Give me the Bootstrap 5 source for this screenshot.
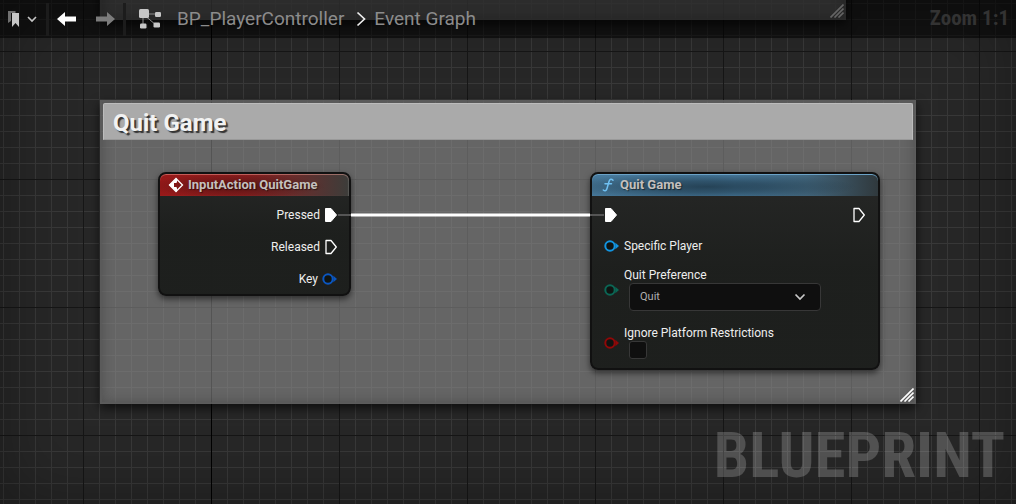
<!DOCTYPE html>
<html lang="en" data-bs-theme="dark">
<head>
<meta charset="utf-8">
<meta name="viewport" content="width=device-width, initial-scale=1">
<title>BP_PlayerController – Event Graph</title>
<link rel="stylesheet" href="https://cdn.jsdelivr.net/npm/bootstrap@5.3.0/dist/css/bootstrap.min.css">
<style>
  body { font-family: Roboto, "Liberation Sans", sans-serif; background: #262626; }

  /* Graph canvas: origin axis, major lines each 128px, minor lines each 16px */
  .graph {
    background:
      linear-gradient(#000, #000) 211px 0 / 1px 100% no-repeat,
      linear-gradient(90deg, #161616 1px, transparent 1px) 83px 0 / 128px 128px,
      linear-gradient(#161616 1px, transparent 1px) 0 51px / 128px 128px,
      linear-gradient(90deg, #383838 1px, transparent 1px) 3px 0 / 16px 16px,
      linear-gradient(#383838 1px, transparent 1px) 0 3px / 16px 16px,
      #272727;
  }
  .vignette { box-shadow: inset 0 0 70px rgba(0, 0, 0, .34); }

  .toolbar { height: 38px; background: rgba(0, 0, 0, .55); z-index: 5; padding: 0 7px 0 7px; }
  .tool { border: 0; background: none; padding: 0; line-height: 0; }
  .divider { width: 3px; height: 33px; background: #1c1c1c; }
  .crumb { color: #8c8c8c; font-size: 19px; line-height: 24px; margin-bottom: 1px; text-decoration: none; }
  .zoom-level { font: bold 21px/24px "Roboto Condensed", "Liberation Sans Narrow", sans-serif; color: #333; margin-bottom: 2px; }
  .watermark { right: 11px; bottom: 10px; font: bold 63px/76px "Roboto Condensed", "Liberation Sans Narrow", sans-serif; color: rgba(255, 255, 255, .2); }

  .comment-box {
    background: rgba(150, 150, 150, .56);
    border: 2px solid rgba(85, 85, 85, .7);
    box-shadow: 0 4px 10px rgba(0, 0, 0, .65), inset 0 0 12px rgba(40, 40, 40, .35);
  }
  .comment-main { left: 100px; top: 100px; width: 816px; height: 304px; padding: 1px; }
  .comment-above { left: 100px; top: -180px; width: 746px; height: 200px; color: #e0e0e0; }
  .comment-title {
    height: 37px; padding: 0 9px; background: #aaa; border: 1px solid #bcbcbc; border-bottom-color: #999; border-radius: 2px 2px 0 0;
    color: #f2f2f2; font-size: 24px; line-height: 38px; font-weight: 700; text-shadow: 2px 2px 1px #333;
  }
  .grip { right: 0; bottom: 0; }

  .node {
    top: 172px; border: 2px solid #111; border-radius: 8px;
    background: linear-gradient(rgba(36, 37, 36, .97), rgba(27, 29, 27, .97) 50%);
    box-shadow: 0 3px 6px rgba(0, 0, 0, .55); color: #eee; font-size: 12px; line-height: 15px;
  }
  .node-event { left: 158px; width: 193px; height: 124px; }
  .node-call { left: 590px; width: 290px; height: 198px; }
  .node-head {
    height: 22px; padding-left: 8px; gap: 4px; border-radius: 6px 6px 0 0; margin-bottom: 3px;
    color: #c4c0be; font-size: 13px; line-height: 14px; font-weight: 700; text-shadow: 1px 1px 1px rgba(0, 0, 0, .5);
  }
  .head-event {
    background: radial-gradient(ellipse 90px 12px at 40% 55%, rgba(50, 15, 15, .6), transparent),
      linear-gradient(90deg, #981919, #8a1d1d 45%, #6a2c2b 70%, #3c3d3a);
    box-shadow: inset 0 1px 0 rgba(255, 170, 160, .45), inset -1px 0 1px rgba(200, 200, 200, .2);
  }
  .head-call {
    background: radial-gradient(ellipse 150px 14px at 40% 58%, rgba(22, 42, 55, .7), rgba(22, 42, 55, .5) 40%, transparent),
      linear-gradient(90deg, #47799b, #4a7ea2 50%, #42667d 75%, #30393d);
    box-shadow: inset 0 1px 0 #6ba3c8;
  }
  .pin-row { height: 32px; }
  .pins-out { padding-right: 11px; }
  .pins-in { padding-left: 12px; }
  .pin-field { gap: 5px; margin-bottom: 15px; }
  .player-field { height: 30px; margin-bottom: 7px; }
  .pref-select {
    width: 192px; height: 28px; margin-left: 5px; padding: 0 10px; border: 1px solid #373737; border-radius: 4px;
    font-size: 11px; color: #b0b0b0; background-color: #0f0f0f; background-position: right 14px center; background-size: 12px 8px;
    background-image: url("data:image/svg+xml,%3Csvg xmlns='http://www.w3.org/2000/svg' width='12' height='8' viewBox='0 0 12 8'%3E%3Cpath d='M1.500 1.500L6 6l4.500-4.500' fill='none' stroke='%23c8c8c8' stroke-width='1.700'/%3E%3C/svg%3E");
  }
  .flag-check { width: 18px; height: 18px; margin: 0 0 0 5px; background-color: #0f0f0f; border: 1px solid #373737; border-radius: 3px; }
</style>
</head>
<body class="vh-100 overflow-hidden">
<svg class="d-none" aria-hidden="true">
  <symbol id="exec-on" viewBox="0 0 14 16"><path d="M1.500 1.500h5.500l5.500 6.500-5.500 6.500H1.500z" fill="#fff" stroke="#fff" stroke-linejoin="round"/></symbol>
  <symbol id="exec-off" viewBox="0 0 14 16"><path d="M2 1.500h5L12.300 8 7 14.500H2z" fill="none" stroke="#fff" stroke-width="1.300" stroke-linejoin="round"/></symbol>
  <symbol id="data-pin" viewBox="0 0 15 12"><circle cx="6" cy="6" r="4.700" fill="#101412" stroke="currentColor" stroke-width="2"/><path d="M11.400 2.800L15 6l-3.600 3.200z" fill="currentColor"/></symbol>
  <symbol id="grip-lines" viewBox="0 0 14 14"><path d="M.5 13.500l13-13M4.500 13.500l9-9M8.500 13.500l5-5" fill="none" stroke="currentColor" stroke-width="1.600"/></symbol>
</svg>

<main class="graph position-relative h-100 overflow-hidden">
  <div class="vignette position-absolute top-0 start-0 w-100 h-100"></div>
  <section class="comment-box comment-above position-absolute">
    <svg class="grip position-absolute" width="14" height="14"><use href="#grip-lines"/></svg>
  </section>

  <header class="toolbar position-relative d-flex align-items-center">
    <button class="tool d-flex align-items-center" type="button" aria-label="Bookmarks">
      <svg width="31" height="18" viewBox="0 0 31 18"><path d="M1 1h7.500v2H4v8l-3 2z" fill="#707070"/><path d="M5 3h7v14l-3.500-4L5 17z" fill="#c6c6c6"/><path d="M21 7l4 4 4-4" fill="none" stroke="#c6c6c6" stroke-width="1.600"/></svg>
    </button>
    <div class="divider ms-2"></div>
    <button class="tool ms-2" type="button" aria-label="Back"><svg width="19" height="14" viewBox="0 0 19 14"><path d="M0 7l8-7v4.500h11v5H8V14z" fill="#fff"/></svg></button>
    <button class="tool ms-3 ps-1" type="button" aria-label="Forward"><svg width="19" height="14" viewBox="0 0 19 14"><path d="M19 7l-8-7v4.500H0v5h11V14z" fill="#7c7c7c"/></svg></button>
    <div class="divider ms-2"></div>
    <nav class="d-flex align-items-center ms-2 ps-1" aria-label="Graph path">
      <svg width="23" height="20" viewBox="0 0 23 20"><path d="M5 5h14M5 5v12M5 5l13 11" stroke="#8c8c8c" fill="none"/><g fill="#c6c6c6"><rect x="1" width="10" height="9" rx="1.500"/><rect x="17" y="3" width="6" height="5" rx="1.200"/><rect x="2" y="14.500" width="6.500" height="5" rx="1.200"/><rect x="15.500" y="13.500" width="6.500" height="5" rx="1.200"/></g></svg>
      <a class="crumb ms-3 pe-1" href="#">BP_PlayerController</a>
      <svg class="mx-2" width="10" height="16" viewBox="0 0 10 16"><path d="M1.500 1.500L8.500 8l-7 6.500" fill="none" stroke="#eee" stroke-width="1.700"/></svg>
      <a class="crumb" href="#">Event Graph</a>
    </nav>
    <span class="zoom-level ms-auto">Zoom 1:1</span>
  </header>

  <div class="watermark position-absolute">BLUEPRINT</div>

  <section class="comment-box comment-main position-absolute text-white">
    <h1 class="comment-title m-0">Quit Game</h1>
    <svg class="grip position-absolute" width="14" height="14"><use href="#grip-lines"/></svg>
  </section>

  <article class="node node-event position-absolute">
    <div class="node-head head-event d-flex align-items-center">
      <svg width="16" height="16" viewBox="0 0 16 16"><path d="M8 1.500L14.500 8 8 14.500 1.500 8z" fill="none" stroke="#fff" stroke-width="1.300"/><path d="M9 1L1 8l8 7v-3.500L8.500 10H6V6h2.500L9 4.500z" fill="#fff"/></svg>
      <span>InputAction QuitGame</span>
    </div>
    <div class="pins-out">
      <div class="pin-row d-flex align-items-center justify-content-end gap-1">Pressed<svg width="14" height="16"><use href="#exec-on"/></svg></div>
      <div class="pin-row d-flex align-items-center justify-content-end gap-1">Released<svg width="14" height="16"><use href="#exec-off"/></svg></div>
      <div class="pin-row d-flex align-items-center justify-content-end gap-1">Key<svg width="16" height="12" viewBox="0 0 16 12" style="color:#0b56c0"><use href="#data-pin" width="15" height="12"/></svg></div>
    </div>
  </article>

  <article class="node node-call position-absolute">
    <div class="node-head head-call d-flex align-items-center">
      <svg width="16" height="16" viewBox="0 0 16 16"><path d="M13 3.200C11.500 1.500 9.700 2 9 4.500L7 11.500C6.400 13.800 5 14.500 3.300 13M5 6.800h6.500" fill="none" stroke="#6fc0f2" stroke-width="1.500" stroke-linecap="round"/></svg>
      <span>Quit Game</span>
    </div>
    <div class="pins-in">
      <div class="pin-row d-flex align-items-center justify-content-between pe-2">
        <svg width="14" height="16"><use href="#exec-on"/></svg>
        <svg class="me-1" width="14" height="16"><use href="#exec-off"/></svg>
      </div>
      <div class="d-flex align-items-center pin-field player-field">
        <svg width="15" height="12" style="color:#1294e0"><use href="#data-pin"/></svg>Specific Player
      </div>
      <div class="d-flex align-items-center pin-field">
        <svg width="15" height="12" style="color:#0b6655"><use href="#data-pin"/></svg>
        <div>
          <label class="d-block" for="preference">Quit Preference</label>
          <select class="form-select pref-select" id="preference"><option>Quit</option><option>Background</option></select>
        </div>
      </div>
      <div class="d-flex align-items-center pin-field">
        <svg width="15" height="12" style="color:#900808"><use href="#data-pin"/></svg>
        <div>
          <label class="d-block" for="restrictions">Ignore Platform Restrictions</label>
          <input class="form-check-input flag-check d-block" type="checkbox" id="restrictions">
        </div>
      </div>
    </div>
  </article>

  <!-- Execution wire, dimmed where it crosses a node edge -->
  <svg class="position-absolute top-0 start-0 pe-none" width="620" height="230" viewBox="0 0 620 230"><path d="M338 215h13M590 215h14" stroke="#555" stroke-width="2"/><path d="M351 215h239" stroke="#fff" stroke-width="3"/></svg>
</main>
<script src="https://cdn.jsdelivr.net/npm/bootstrap@5.3.0/dist/js/bootstrap.bundle.min.js"></script>
</body>
</html>
